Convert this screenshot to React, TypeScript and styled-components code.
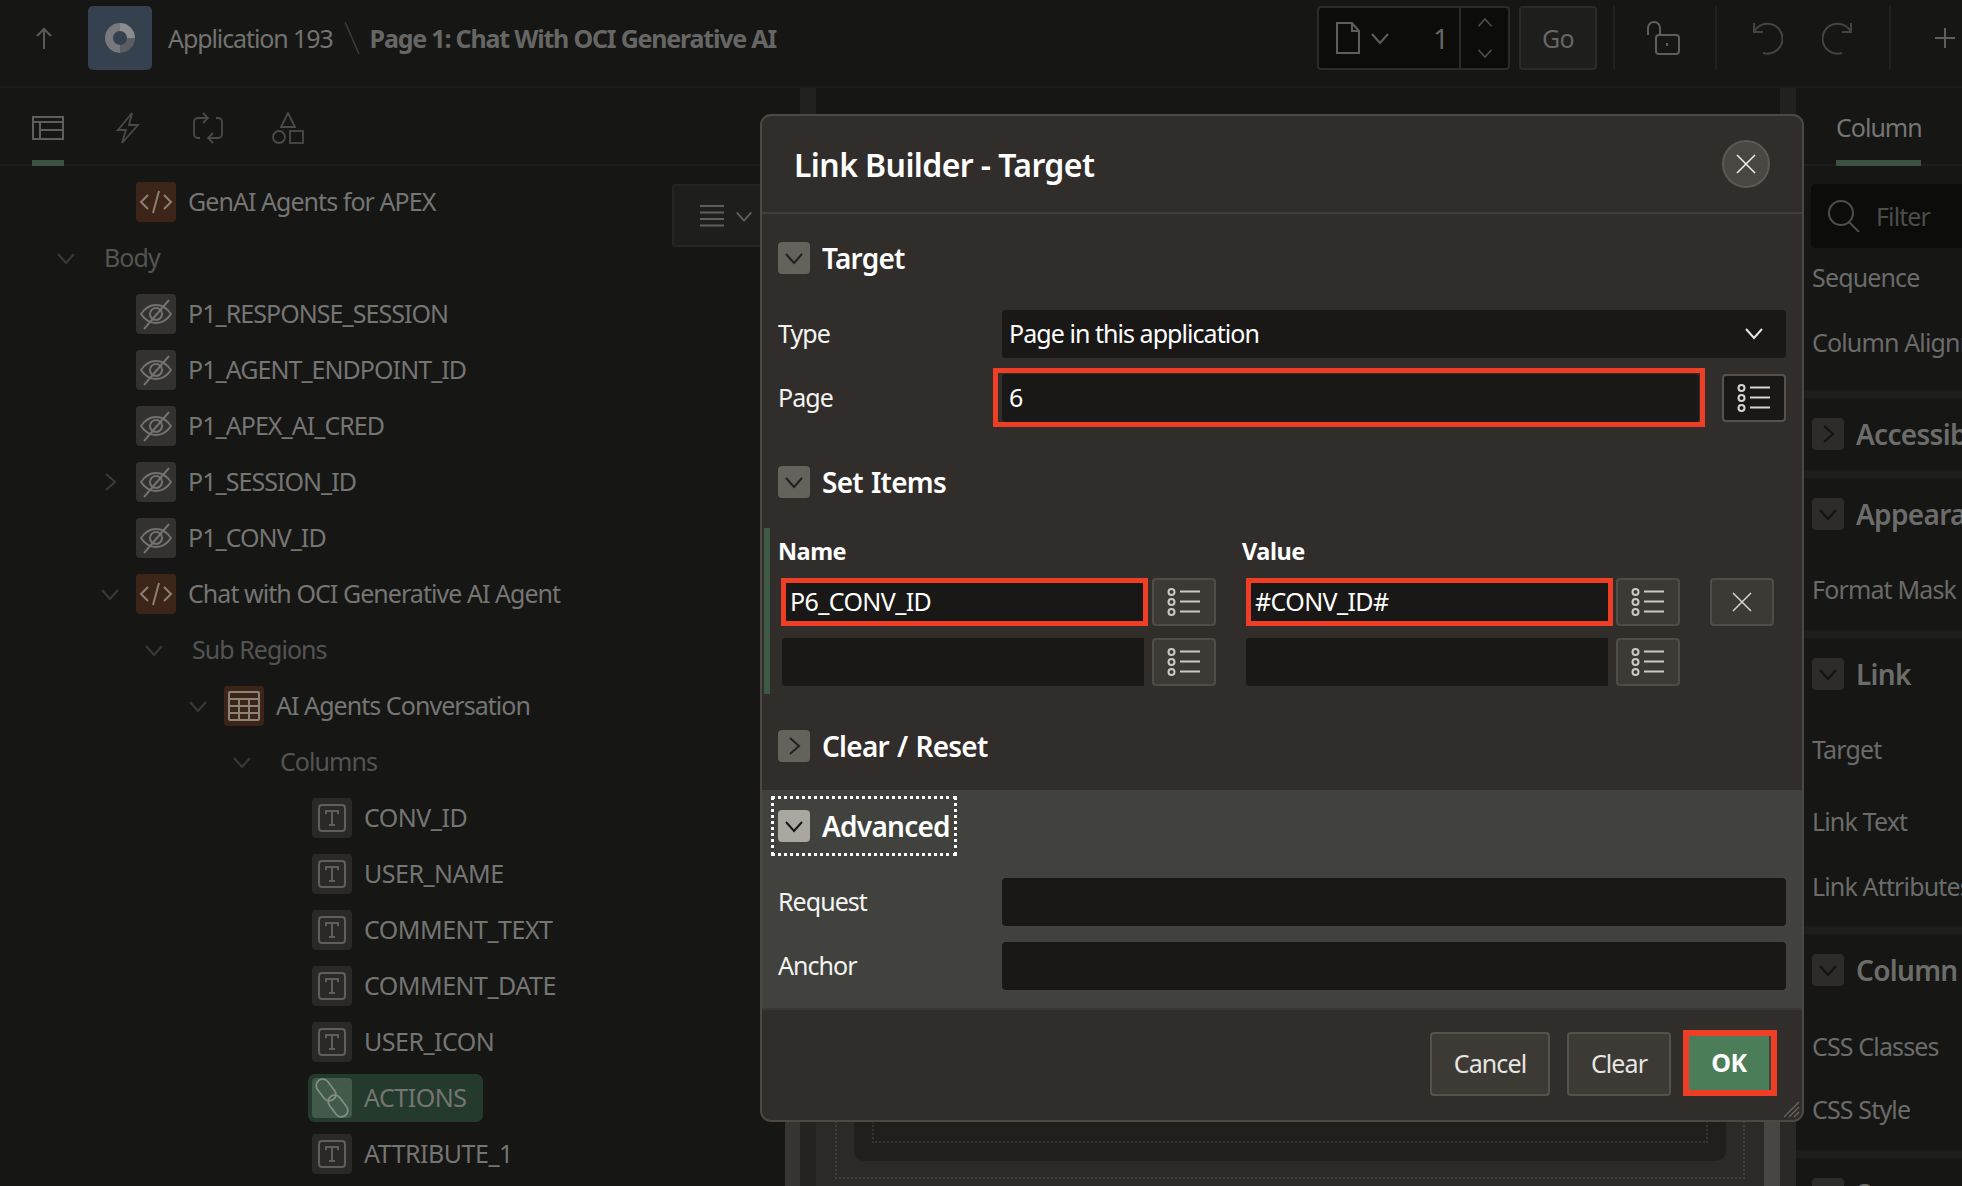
import React from "react";
import styled, { createGlobalStyle } from "styled-components";

const Global = createGlobalStyle`
  html, body { margin: 0; padding: 0; background: #161615; }
  * { box-sizing: border-box; }
`;

const FONT = `"Noto Sans", "Open Sans", sans-serif`;

const Page = styled.div`
  position: relative;
  width: 1962px;
  height: 1186px;
  overflow: hidden;
  background: #161615;
  font-family: ${FONT};
  color: #6f6f6c;
  display: flex;
  flex-direction: column;
`;

/* ---------- top bar ---------- */
const TopBar = styled.header`
  height: 88px;
  flex: none;
  display: flex;
  align-items: center;
  border-bottom: 2px solid #1d1d1b;
  padding: 0 6px 10px 35px;
`;
const UpIcon = styled.svg`
  width: 18px;
  height: 22px;
  margin-right: 35px;
  flex: none;
`;
const AppTile = styled.div`
  width: 64px;
  height: 64px;
  border-radius: 5px;
  background: #364150;
  display: flex;
  align-items: center;
  justify-content: center;
  flex: none;
`;
const AppName = styled.span`
  font-size: 25px;
  letter-spacing: -1.1px;
  color: #727270;
  margin-left: 16px;
`;
const Slash = styled.svg`
  width: 16px;
  height: 32px;
  margin: 0 10px 0 11px;
  flex: none;
`;
const PageName = styled.span`
  font-size: 25px;
  font-weight: 700;
  letter-spacing: -1.2px;
  color: #666664;
  flex: 1;
`;
const PageBox = styled.div`
  width: 193px;
  height: 64px;
  border: 2px solid #2b2b29;
  border-radius: 4px;
  background: #0c0c0b;
  display: flex;
  align-items: center;
  flex: none;
`;
const PageNumber = styled.div`
  flex: 1;
  display: flex;
  align-items: center;
  padding-left: 17px;
  height: 100%;
  font-size: 28px;
  color: #666664;
`;
const PageChevron = styled.span`
  margin-left: 9px;
  display: flex;
`;
const NumberText = styled.span`
  margin-left: 42px;
`;
const Spinner = styled.div`
  width: 49px;
  height: 100%;
  border-left: 2px solid #2b2b29;
  display: flex;
  flex-direction: column;
  align-items: center;
  justify-content: space-between;
  padding: 6px 0;
`;
const GoButton = styled.div`
  width: 78px;
  height: 64px;
  margin-left: 9px;
  border: 2px solid #2b2b29;
  border-radius: 4px;
  background: #1e1e1c;
  display: flex;
  align-items: center;
  justify-content: center;
  font-size: 25px;
  letter-spacing: -0.6px;
  color: #666664;
  flex: none;
`;
const BarRule = styled.div<{ $left: number }>`
  width: 2px;
  height: 64px;
  background: #20201e;
  flex: none;
  margin-left: ${(p) => p.$left}px;
`;
const BarIcon = styled.svg<{ $left: number }>`
  flex: none;
  margin-left: ${(p) => p.$left}px;
`;

/* ---------- body ---------- */
const Body = styled.div`
  flex: 1;
  display: flex;
  min-height: 0;
`;
const LeftPane = styled.section`
  position: relative;
  width: 785px;
  flex: none;
  display: flex;
  flex-direction: column;
`;
const TabStrip = styled.div`
  height: 78px;
  flex: none;
  display: flex;
  border-bottom: 2px solid #1d1d1b;
  padding-left: 32px;
  gap: 48px;
`;
const Tab = styled.div<{ $active?: boolean }>`
  width: 32px;
  height: 78px;
  padding: 24px 0 16px;
  display: flex;
  justify-content: center;
  align-items: center;
  border-bottom: 6px solid ${(p) => (p.$active ? "#3c5240" : "transparent")};
`;
const Tree = styled.div`
  padding-top: 8px;
  display: flex;
  flex-direction: column;
`;
const Row = styled.div<{ $chevron: number; $caps?: boolean }>`
  height: 56px;
  flex: none;
  display: flex;
  align-items: center;
  padding-left: ${(p) => p.$chevron - 13}px;
  font-size: 25px;
  letter-spacing: ${(p) => (p.$caps ? "-0.5px" : "-0.95px")};
  white-space: nowrap;
  color: #757573;
`;
const ChevronSlot = styled.span`
  width: 39px;
  padding-right: 13px;
  flex: none;
  display: flex;
  justify-content: center;
`;
const GroupLabel = styled.span`
  margin: -2px 0 0 12px;
  color: #545452;
`;
const NodeTile = styled.span<{ $tone: "orange" | "grey" | "dark" | "green" }>`
  width: 40px;
  height: 40px;
  flex: none;
  border-radius: 4px;
  display: flex;
  align-items: center;
  justify-content: center;
  background: ${(p) =>
    p.$tone === "orange"
      ? "#3c2418"
      : p.$tone === "green"
      ? "#425a49"
      : p.$tone === "dark"
      ? "#2a2927"
      : "#343230"};
`;
const NodeLabel = styled.span`
  margin: -2px 0 0 12px;
`;
const Selected = styled.span`
  display: flex;
  align-items: center;
  height: 48px;
  margin-left: -4px;
  padding: 0 17px 0 4px;
  border-radius: 7px;
  background: #243a2c;
`;
const ViewMenu = styled.div`
  position: absolute;
  left: 672px;
  top: 96px;
  width: 110px;
  height: 63px;
  border: 2px solid #252523;
  border-radius: 4px;
  background: #1e1e1c;
  display: flex;
  align-items: center;
  gap: 10px;
  padding-left: 26px;
`;

const Center = styled.section`
  flex: 1;
  display: flex;
  flex-direction: column;
  min-width: 0;
`;
const CenterTop = styled.div`
  height: 40px;
  flex: none;
  display: flex;
  justify-content: space-between;
  padding-left: 15px;
`;
const TopGutter = styled.div`
  width: 16px;
  background: #212120;
`;
const Canvas = styled.div`
  flex: 1;
  display: flex;
  background: #2c2a28;
`;
const CanvasGutter = styled.div<{ $w: number; $c: string }>`
  width: ${(p) => p.$w}px;
  flex: none;
  background: ${(p) => p.$c};
`;
const GridOuter = styled.div`
  flex: 1;
  margin: 0 19px 7px 19px;
  padding: 0 17px 16px;
  border: 2px dotted #413f3c;
  border-top: 0;
  display: flex;
`;
const GridInner = styled.div`
  flex: 1;
  background: #201f1d;
  border-radius: 0 0 10px 10px;
  padding: 0 18px 18px;
  display: flex;
`;
const GridDots = styled.div`
  flex: 1;
  border: 2px dotted #383633;
  border-top: 0;
`;

const RightPane = styled.aside`
  width: 166px;
  flex: none;
  overflow: hidden;
  display: flex;
  flex-direction: column;
`;
const RightTabs = styled.div`
  height: 78px;
  flex: none;
  border-bottom: 2px solid #1d1d1b;
  padding-left: 40px;
  display: flex;
`;
const RightTab = styled.div`
  width: 85px;
  height: 78px;
  border-bottom: 6px solid #3c5240;
  font-size: 25px;
  letter-spacing: -1px;
  color: #757573;
  padding-top: 22px;
  white-space: nowrap;
`;
const FilterBox = styled.div`
  width: 300px;
  height: 64px;
  margin: 18px 0 0 15px;
  border-radius: 5px;
  background: #0c0c0b;
  display: flex;
  align-items: center;
  padding-left: 17px;
  font-size: 25px;
  letter-spacing: -0.9px;
  color: #4c4c4a;
  flex: none;
`;
const FilterText = styled.span`
  margin-left: 16px;
`;
const PropRow = styled.div<{ $h: number }>`
  height: ${(p) => p.$h}px;
  flex: none;
  padding: 0 0 2px 16px;
  display: flex;
  align-items: center;
  white-space: nowrap;
  font-size: 25px;
  letter-spacing: -0.85px;
  color: #6b6b69;
`;
const SectionBand = styled.div`
  height: 8px;
  flex: none;
  background: #1e1e1c;
`;
const SectionHead = styled.div`
  height: 72px;
  flex: none;
  padding-left: 16px;
  display: flex;
  align-items: center;
  gap: 12px;
  white-space: nowrap;
  font-size: 28px;
  font-weight: 600;
  letter-spacing: -0.7px;
  color: #6c6c6a;
`;
const DimToggle = styled.span`
  width: 32px;
  height: 32px;
  flex: none;
  border-radius: 4px;
  background: #2d2c2a;
  display: flex;
  align-items: center;
  justify-content: center;
`;

/* ---------- dialog ---------- */
const Dialog = styled.div`
  position: absolute;
  left: 760px;
  top: 114px;
  width: 1044px;
  height: 1008px;
  border: 2px solid #4d4842;
  border-radius: 11px;
  background: #312d2a;
  display: flex;
  flex-direction: column;
  overflow: hidden;
  color: #fff;
`;
const DialogHead = styled.div`
  height: 98px;
  flex: none;
  border-bottom: 2px solid #423e3a;
  display: flex;
  align-items: center;
  justify-content: space-between;
  padding: 0 32px;
`;
const DialogTitle = styled.h1`
  margin: 0;
  font-size: 32px;
  font-weight: 600;
  letter-spacing: -0.6px;
  color: #fff;
`;
const CloseBtn = styled.div`
  width: 48px;
  height: 48px;
  border-radius: 50%;
  background: #4a4743;
  border: 2px solid #5c5954;
  display: flex;
  align-items: center;
  justify-content: center;
`;
const Region = styled.div<{ $focus?: boolean; $pt: number; $pb: number }>`
  flex: none;
  padding: ${(p) => p.$pt}px 16px ${(p) => p.$pb}px;
  background: ${(p) => (p.$focus ? "#41423d" : "transparent")};
`;
const RegionHead = styled.div`
  display: flex;
  align-items: center;
  gap: 12px;
  height: 32px;
  font-size: 28px;
  font-weight: 600;
  letter-spacing: -0.75px;
  word-spacing: 1.5px;
  white-space: nowrap;
`;
const FocusRing = styled.span`
  display: flex;
  align-items: center;
  gap: 12px;
  position: relative;
  &::after {
    content: "";
    position: absolute;
    left: -7px;
    right: -7px;
    top: -11px;
    bottom: -11px;
    border: 3px dotted #fff;
  }
`;
const Toggle = styled.span<{ $focus?: boolean }>`
  width: 32px;
  height: 32px;
  flex: none;
  border-radius: 4px;
  background: ${(p) => (p.$focus ? "#aaa6a0" : "#65625c")};
  display: flex;
  align-items: center;
  justify-content: center;
`;
const FieldRow = styled.div<{ $top: number }>`
  display: grid;
  grid-template-columns: 224px 1fr;
  align-items: center;
  margin-top: ${(p) => p.$top}px;
  font-size: 25px;
  letter-spacing: -0.95px;
`;
const FieldLabel = styled.label`
  color: #f4f4f2;
  margin-top: -2px;
`;
const Field = styled.div<{ $mark?: boolean }>`
  height: 48px;
  background: #191816;
  border-radius: 4px;
  display: flex;
  align-items: center;
  justify-content: space-between;
  padding: 0 21px 2px 7px;
  color: #fff;
  position: relative;
  ${(p) =>
    p.$mark
      ? `&::after { content: ""; position: absolute; left: -9px; right: -6px; top: -6px; bottom: -5px; border: 5.5px solid #ee3f26; }`
      : ""}
`;
const LovField = styled.div`
  display: flex;
  gap: 23px;
  align-items: center;
`;
const Grow = styled.div`
  flex: 1;
`;
const IconButton = styled.div<{ $ml?: number; $dark?: boolean }>`
  width: 64px;
  height: 48px;
  flex: none;
  margin-left: ${(p) => p.$ml ?? 0}px;
  border: 2px solid ${(p) => (p.$dark ? "#55524d" : "#504d48")};
  border-radius: 4px;
  background: ${(p) => (p.$dark ? "#191816" : "#3d3a36")};
  display: flex;
  align-items: center;
  justify-content: center;
`;
const SetGrid = styled.div`
  position: relative;
  margin-top: 30px;
  padding-bottom: 8px;
  font-size: 25px;
  letter-spacing: -0.6px;
  &::before {
    content: "";
    position: absolute;
    left: -14px;
    top: 0;
    bottom: 0;
    width: 6px;
    background: #3c5a44;
  }
`;
const HeaderCells = styled.div`
  display: flex;
  height: 50px;
  padding-bottom: 5px;
  align-items: center;
  font-weight: 700;
  font-size: 23.5px;
  letter-spacing: -0.5px;
`;
const NameHead = styled.span`
  width: 464px;
`;
const SetRow = styled.div`
  display: flex;
  align-items: center;
  padding-left: 3px;
  & + & {
    margin-top: 12px;
  }
`;
const SetInput = styled.div<{ $mark?: boolean; $w: number; $ml: number; $mr: number }>`
  width: ${(p) => p.$w}px;
  height: 48px;
  flex: none;
  margin: 0 ${(p) => p.$mr}px 0 ${(p) => p.$ml}px;
  background: #191816;
  display: flex;
  align-items: center;
  padding: 0 0 2px 4px;
  border: ${(p) => (p.$mark ? "5.5px solid #ee3f26" : "0")};
  border-radius: ${(p) => (p.$mark ? "0" : "4px 0 0 4px")};
  color: #fff;
`;
const Footer = styled.div`
  flex: 1;
  display: flex;
  justify-content: flex-end;
  align-items: flex-start;
  padding: 22px 25px 0 0;
  position: relative;
  border-top: 2px solid #3a3835;
`;
const FootBtn = styled.div<{ $w: number; $mr: number }>`
  width: ${(p) => p.$w}px;
  height: 64px;
  margin-right: ${(p) => p.$mr}px;
  border: 2px solid #55524d;
  border-radius: 4px;
  background: #3d3a36;
  color: #e6e6e3;
  display: flex;
  align-items: center;
  justify-content: center;
  padding-bottom: 2px;
  font-size: 25px;
  letter-spacing: -0.9px;
`;
const OkBtn = styled.div`
  width: 94px;
  height: 66px;
  margin-top: -2px;
  border: 6px solid #ee3f26;
  background: #4b7d58;
  box-shadow: inset -2px 0 0 #3a4640;
  color: #fff;
  font-size: 25px;
  font-weight: 700;
  letter-spacing: -0.5px;
  display: flex;
  align-items: center;
  justify-content: center;
  padding: 0 2px 2px 0;
`;
const Grip = styled.svg`
  position: absolute;
  right: 2px;
  bottom: 2px;
`;

/* ---------- drawings ---------- */
type ChevProps = { dir?: "down" | "right" | "up"; size?: number; color: string; sw?: number };
const Chev = ({ dir = "down", size = 22, color, sw = 2 }: ChevProps) => {
  const d =
    dir === "down" ? "M3 7l8 9 8-9" : dir === "up" ? "M3 15l8-9 8 9" : "M7 3l9 8-9 8";
  return (
    <svg width={size} height={size} viewBox="0 0 22 22" fill="none" stroke={color} strokeWidth={sw}>
      <path d={d} />
    </svg>
  );
};
const CodeGlyph = () => (
  <svg width="34" height="26" viewBox="0 0 34 26" fill="none" stroke="#8b7f73" strokeWidth="2">
    <path d="M9 6l-7 7 7 7M25 6l7 7-7 7M20 2l-6 22" />
  </svg>
);
const HiddenGlyph = () => (
  <svg width="34" height="32" viewBox="0 0 34 32" fill="none" stroke="#74726f" strokeWidth="2">
    <path d="M2 16c4-6 9-9 15-9s11 3 15 9c-4 6-9 9-15 9S6 22 2 16z" />
    <circle cx="17" cy="16" r="6" />
    <path d="M5 31L30 2" />
  </svg>
);
const TableGlyph = () => (
  <svg width="32" height="30" viewBox="0 0 32 30" fill="none" stroke="#8b8579" strokeWidth="2">
    <rect x="1" y="1" width="30" height="28" rx="1" />
    <path d="M1 8h30M1 15h30M1 22h30M11 8v21M21 8v21" />
  </svg>
);
const TextGlyph = () => (
  <svg width="28" height="28" viewBox="0 0 28 28" fill="none" stroke="#5e5e5c" strokeWidth="2">
    <rect x="1" y="1" width="26" height="26" rx="3" />
    <path d="M8 10V7h12v3M14 7v14M11 21h6" />
  </svg>
);
const LinkGlyph = () => (
  <svg width="36" height="42" viewBox="0 0 36 42" fill="none" stroke="#7f8f82" strokeWidth="1.8">
    <rect x="0" y="6.500" width="24" height="13" rx="6.500" transform="rotate(53 12 13)" />
    <rect x="12" y="22.500" width="24" height="13" rx="6.500" transform="rotate(53 24 29)" />
  </svg>
);
const LovGlyph = ({ color }: { color: string }) => (
  <svg width="34" height="30" viewBox="0 0 34 30" fill="none" stroke={color} strokeWidth="2">
    <circle cx="4.5" cy="5" r="3" />
    <circle cx="4.5" cy="15" r="3" />
    <circle cx="4.5" cy="25" r="3" />
    <path d="M13 4.500h20M13 14.500h20M13 24.500h20" />
  </svg>
);
const CrossGlyph = ({ size, color }: { size: number; color: string }) => (
  <svg width={size} height={size} viewBox="0 0 20 20" fill="none" stroke={color} strokeWidth={1.5}>
    <path d="M1 1l18 18M19 1L1 19" />
  </svg>
);

const dim = "#3a3a38";

const ItemRow = ({ name, chev }: { name: string; chev?: "down" | "right" }) => (
  <Row $chevron={110}>
    <ChevronSlot>{chev && <Chev dir={chev} color={dim} />}</ChevronSlot>
    <NodeTile $tone="grey"><HiddenGlyph /></NodeTile>
    <NodeLabel>{name}</NodeLabel>
  </Row>
);
const ColumnRow = ({ name }: { name: string }) => (
  <Row $chevron={286} $caps>
    <ChevronSlot />
    <NodeTile $tone="dark"><TextGlyph /></NodeTile>
    <NodeLabel>{name}</NodeLabel>
  </Row>
);
const GroupRow = ({ name, chevron }: { name: string; chevron: number }) => (
  <Row $chevron={chevron}>
    <ChevronSlot><Chev color={dim} /></ChevronSlot>
    <GroupLabel>{name}</GroupLabel>
  </Row>
);

export default function App() {
  return (
    <Page>
      <Global />
      <TopBar>
        <UpIcon viewBox="0 0 18 22" fill="none" stroke="#5a5a58" strokeWidth="2">
          <path d="M9 22V2M2 9l7-7 7 7" />
        </UpIcon>
        <AppTile>
          <svg width="30" height="30" viewBox="0 0 30 30">
            <path d="M15 0A15 15 0 1 0 15 30V22A7 7 0 1 1 15 8Z" fill="#77797c" />
            <path d="M15 0A15 15 0 0 1 30 15H22A7 7 0 0 0 15 8Z" fill="#8a8c8e" />
            <path d="M30 15A15 15 0 0 1 15 30V22A7 7 0 0 0 22 15Z" fill="#5a5d61" />
          </svg>
        </AppTile>
        <AppName>Application 193</AppName>
        <Slash viewBox="0 0 16 32" fill="none" stroke="#3c3c3a" strokeWidth="1.5">
          <path d="M1 0l14 32" />
        </Slash>
        <PageName>Page 1: Chat With OCI Generative AI</PageName>
        <PageBox>
          <PageNumber>
            <svg width="24" height="32" viewBox="0 0 24 32" fill="none" stroke="#5e5e5c" strokeWidth="2">
              <path d="M1 1h15l7 8v22H1zM16 1v8h7" />
            </svg>
            <PageChevron><Chev color="#5e5e5c" /></PageChevron>
            <NumberText>1</NumberText>
          </PageNumber>
          <Spinner>
            <Chev dir="up" size={18} color="#4e4e4c" />
            <Chev size={18} color="#4e4e4c" />
          </Spinner>
        </PageBox>
        <GoButton>Go</GoButton>
        <BarRule $left={16} />
        <BarIcon $left={31} width="34" height="34" viewBox="0 0 34 34" fill="none" stroke="#5e5e5c" strokeWidth="2">
          <path d="M2 14V7a6 6 0 0 1 12 0v6" />
          <rect x="10" y="14" width="23" height="19" rx="3" />
          <path d="M21 22v3" />
        </BarIcon>
        <BarRule $left={35} />
        <BarIcon $left={34} width="32" height="34" viewBox="0 0 32 34" fill="none" stroke="#444442" strokeWidth="2">
          <path d="M3 2v9h9M3 11A15 15 0 1 1 12 32" />
        </BarIcon>
        <BarIcon $left={39} width="32" height="34" viewBox="0 0 32 34" fill="none" stroke="#444442" strokeWidth="2">
          <path d="M29 2v9h-9M29 11A15 15 0 1 0 20 32" />
        </BarIcon>
        <BarRule $left={35} />
        <BarIcon $left={43} width="22" height="22" viewBox="0 0 22 22" fill="none" stroke="#5e5e5c" strokeWidth="2">
          <path d="M11 1v20M1 11h20" />
        </BarIcon>
      </TopBar>
      <Body>
        <LeftPane>
          <TabStrip>
            <Tab $active>
              <svg width="32" height="24" viewBox="0 0 32 24" fill="none" stroke="#5e5e5c" strokeWidth="2">
                <rect x="1" y="1" width="30" height="22" />
                <path d="M1 6h30M8 6v17M8 14h23" />
              </svg>
            </Tab>
            <Tab>
              <svg width="24" height="32" viewBox="0 0 24 32" fill="none" stroke="#4a4a48" strokeWidth="1.8">
                <path d="M16 1L2 18h8l-4 13 16-18h-9z" />
              </svg>
            </Tab>
            <Tab>
              <svg width="32" height="32" viewBox="0 0 32 32" fill="none" stroke="#4a4a48" strokeWidth="1.8">
                <path d="M15 6H6a4 4 0 0 0-4 4v12a4 4 0 0 0 4 4h2M11 1l5 5-5 5" />
                <path d="M17 26h9a4 4 0 0 0 4-4V10a4 4 0 0 0-4-4h-2M21 21l-5 5 5 5" />
              </svg>
            </Tab>
            <Tab>
              <svg width="32" height="32" viewBox="0 0 32 32" fill="none" stroke="#4a4a48" strokeWidth="1.8">
                <path d="M16 1l7 14H9z" />
                <circle cx="7" cy="25" r="6" />
                <rect x="18" y="19" width="13" height="12" />
              </svg>
            </Tab>
          </TabStrip>
          <Tree>
            <Row $chevron={110}>
              <ChevronSlot />
              <NodeTile $tone="orange"><CodeGlyph /></NodeTile>
              <NodeLabel>GenAI Agents for APEX</NodeLabel>
            </Row>
            <GroupRow name="Body" chevron={66} />
            <ItemRow name="P1_RESPONSE_SESSION" />
            <ItemRow name="P1_AGENT_ENDPOINT_ID" />
            <ItemRow name="P1_APEX_AI_CRED" />
            <ItemRow name="P1_SESSION_ID" chev="right" />
            <ItemRow name="P1_CONV_ID" />
            <Row $chevron={110}>
              <ChevronSlot><Chev color={dim} /></ChevronSlot>
              <NodeTile $tone="orange"><CodeGlyph /></NodeTile>
              <NodeLabel>Chat with OCI Generative AI Agent</NodeLabel>
            </Row>
            <GroupRow name="Sub Regions" chevron={154} />
            <Row $chevron={198}>
              <ChevronSlot><Chev color={dim} /></ChevronSlot>
              <NodeTile $tone="orange"><TableGlyph /></NodeTile>
              <NodeLabel>AI Agents Conversation</NodeLabel>
            </Row>
            <GroupRow name="Columns" chevron={242} />
            <ColumnRow name="CONV_ID" />
            <ColumnRow name="USER_NAME" />
            <ColumnRow name="COMMENT_TEXT" />
            <ColumnRow name="COMMENT_DATE" />
            <ColumnRow name="USER_ICON" />
            <Row $chevron={286} $caps>
              <ChevronSlot />
              <Selected>
                <NodeTile $tone="green"><LinkGlyph /></NodeTile>
                <NodeLabel>ACTIONS</NodeLabel>
              </Selected>
            </Row>
            <ColumnRow name="ATTRIBUTE_1" />
          </Tree>
          <ViewMenu>
            <svg width="24" height="22" viewBox="0 0 24 22" stroke="#5e5e5c" strokeWidth="2">
              <path d="M0 1h24M0 7.500h24M0 14h24M0 20.500h24" />
            </svg>
            <Chev size={20} color="#5e5e5c" />
          </ViewMenu>
        </LeftPane>
        <Center>
          <CenterTop>
            <TopGutter />
            <TopGutter />
          </CenterTop>
          <Canvas>
            <CanvasGutter $w={15} $c="#373533" />
            <CanvasGutter $w={16} $c="#252321" />
            <GridOuter>
              <GridInner>
                <GridDots />
              </GridInner>
            </GridOuter>
            <CanvasGutter $w={16} $c="#484644" />
            <CanvasGutter $w={16} $c="#2a2927" />
          </Canvas>
        </Center>
        <RightPane>
          <RightTabs>
            <RightTab>Column</RightTab>
          </RightTabs>
          <FilterBox>
            <svg width="32" height="32" viewBox="0 0 32 32" fill="none" stroke="#4e4e4c" strokeWidth="2">
              <circle cx="13" cy="13" r="12" />
              <path d="M21 22l10 10" />
            </svg>
            <FilterText>Filter</FilterText>
          </FilterBox>
          <PropRow $h={60}>Sequence</PropRow>
          <PropRow $h={70}>Column Alignment</PropRow>
          <PropRow $h={12} />
          <SectionBand />
          <SectionHead><DimToggle><Chev dir="right" color="#121211" /></DimToggle>Accessibility</SectionHead>
          <SectionBand />
          <SectionHead><DimToggle><Chev color="#121211" /></DimToggle>Appearance</SectionHead>
          <PropRow $h={80}>Format Mask</PropRow>
          <SectionBand />
          <SectionHead><DimToggle><Chev color="#121211" /></DimToggle>Link</SectionHead>
          <PropRow $h={80}>Target</PropRow>
          <PropRow $h={64}>Link Text</PropRow>
          <PropRow $h={66}>Link Attributes</PropRow>
          <PropRow $h={6} />
          <SectionBand />
          <SectionHead><DimToggle><Chev color="#121211" /></DimToggle>Column</SectionHead>
          <PropRow $h={82}>CSS Classes</PropRow>
          <PropRow $h={44}>CSS Style</PropRow>
          <PropRow $h={18} />
          <SectionBand />
          <SectionHead><DimToggle><Chev color="#121211" /></DimToggle>Server-side</SectionHead>
        </RightPane>
      </Body>
      <Dialog>
        <DialogHead>
          <DialogTitle>Link Builder - Target</DialogTitle>
          <CloseBtn><CrossGlyph size={20} color="#f0f0ee" /></CloseBtn>
        </DialogHead>
        <Region $pt={28} $pb={0}>
          <RegionHead><Toggle><Chev color="#22211f" /></Toggle>Target</RegionHead>
          <FieldRow $top={36}>
            <FieldLabel>Type</FieldLabel>
            <Field>Page in this application<Chev color="#e6e6e3" /></Field>
          </FieldRow>
          <FieldRow $top={16}>
            <FieldLabel>Page</FieldLabel>
            <LovField>
              <Grow><Field $mark>6</Field></Grow>
              <IconButton $dark><LovGlyph color="#d5d5d2" /></IconButton>
            </LovField>
          </FieldRow>
        </Region>
        <Region $pt={44} $pb={0}>
          <RegionHead><Toggle><Chev color="#22211f" /></Toggle>Set Items</RegionHead>
          <SetGrid>
            <HeaderCells>
              <NameHead>Name</NameHead>
              <span>Value</span>
            </HeaderCells>
            <SetRow>
              <SetInput $mark $w={367} $ml={0} $mr={4}>P6_CONV_ID</SetInput>
              <IconButton><LovGlyph color="#c9c9c6" /></IconButton>
              <SetInput $mark $w={367} $ml={30} $mr={3}>#CONV_ID#</SetInput>
              <IconButton><LovGlyph color="#c9c9c6" /></IconButton>
              <IconButton $ml={30}><CrossGlyph size={20} color="#d5d5d2" /></IconButton>
            </SetRow>
            <SetRow>
              <SetInput $w={362} $ml={1} $mr={8} />
              <IconButton><LovGlyph color="#c9c9c6" /></IconButton>
              <SetInput $w={362} $ml={30} $mr={8} />
              <IconButton><LovGlyph color="#c9c9c6" /></IconButton>
            </SetRow>
          </SetGrid>
        </Region>
        <Region $pt={36} $pb={28}>
          <RegionHead><Toggle><Chev dir="right" color="#22211f" /></Toggle>Clear / Reset</RegionHead>
        </Region>
        <Region $focus $pt={20} $pb={18}>
          <RegionHead>
            <FocusRing><Toggle $focus><Chev color="#161514" /></Toggle>Advanced</FocusRing>
          </RegionHead>
          <FieldRow $top={36}>
            <FieldLabel>Request</FieldLabel>
            <Field />
          </FieldRow>
          <FieldRow $top={16}>
            <FieldLabel>Anchor</FieldLabel>
            <Field />
          </FieldRow>
        </Region>
        <Footer>
          <FootBtn $w={120} $mr={17}>Cancel</FootBtn>
          <FootBtn $w={104} $mr={12}>Clear</FootBtn>
          <OkBtn>OK</OkBtn>
          <Grip width="18" height="18" viewBox="0 0 18 18" stroke="#6a6762" strokeWidth="1.2">
            <path d="M2 17L17 2M7 17L17 7M12 17l5-5" />
          </Grip>
        </Footer>
      </Dialog>
    </Page>
  );
}
